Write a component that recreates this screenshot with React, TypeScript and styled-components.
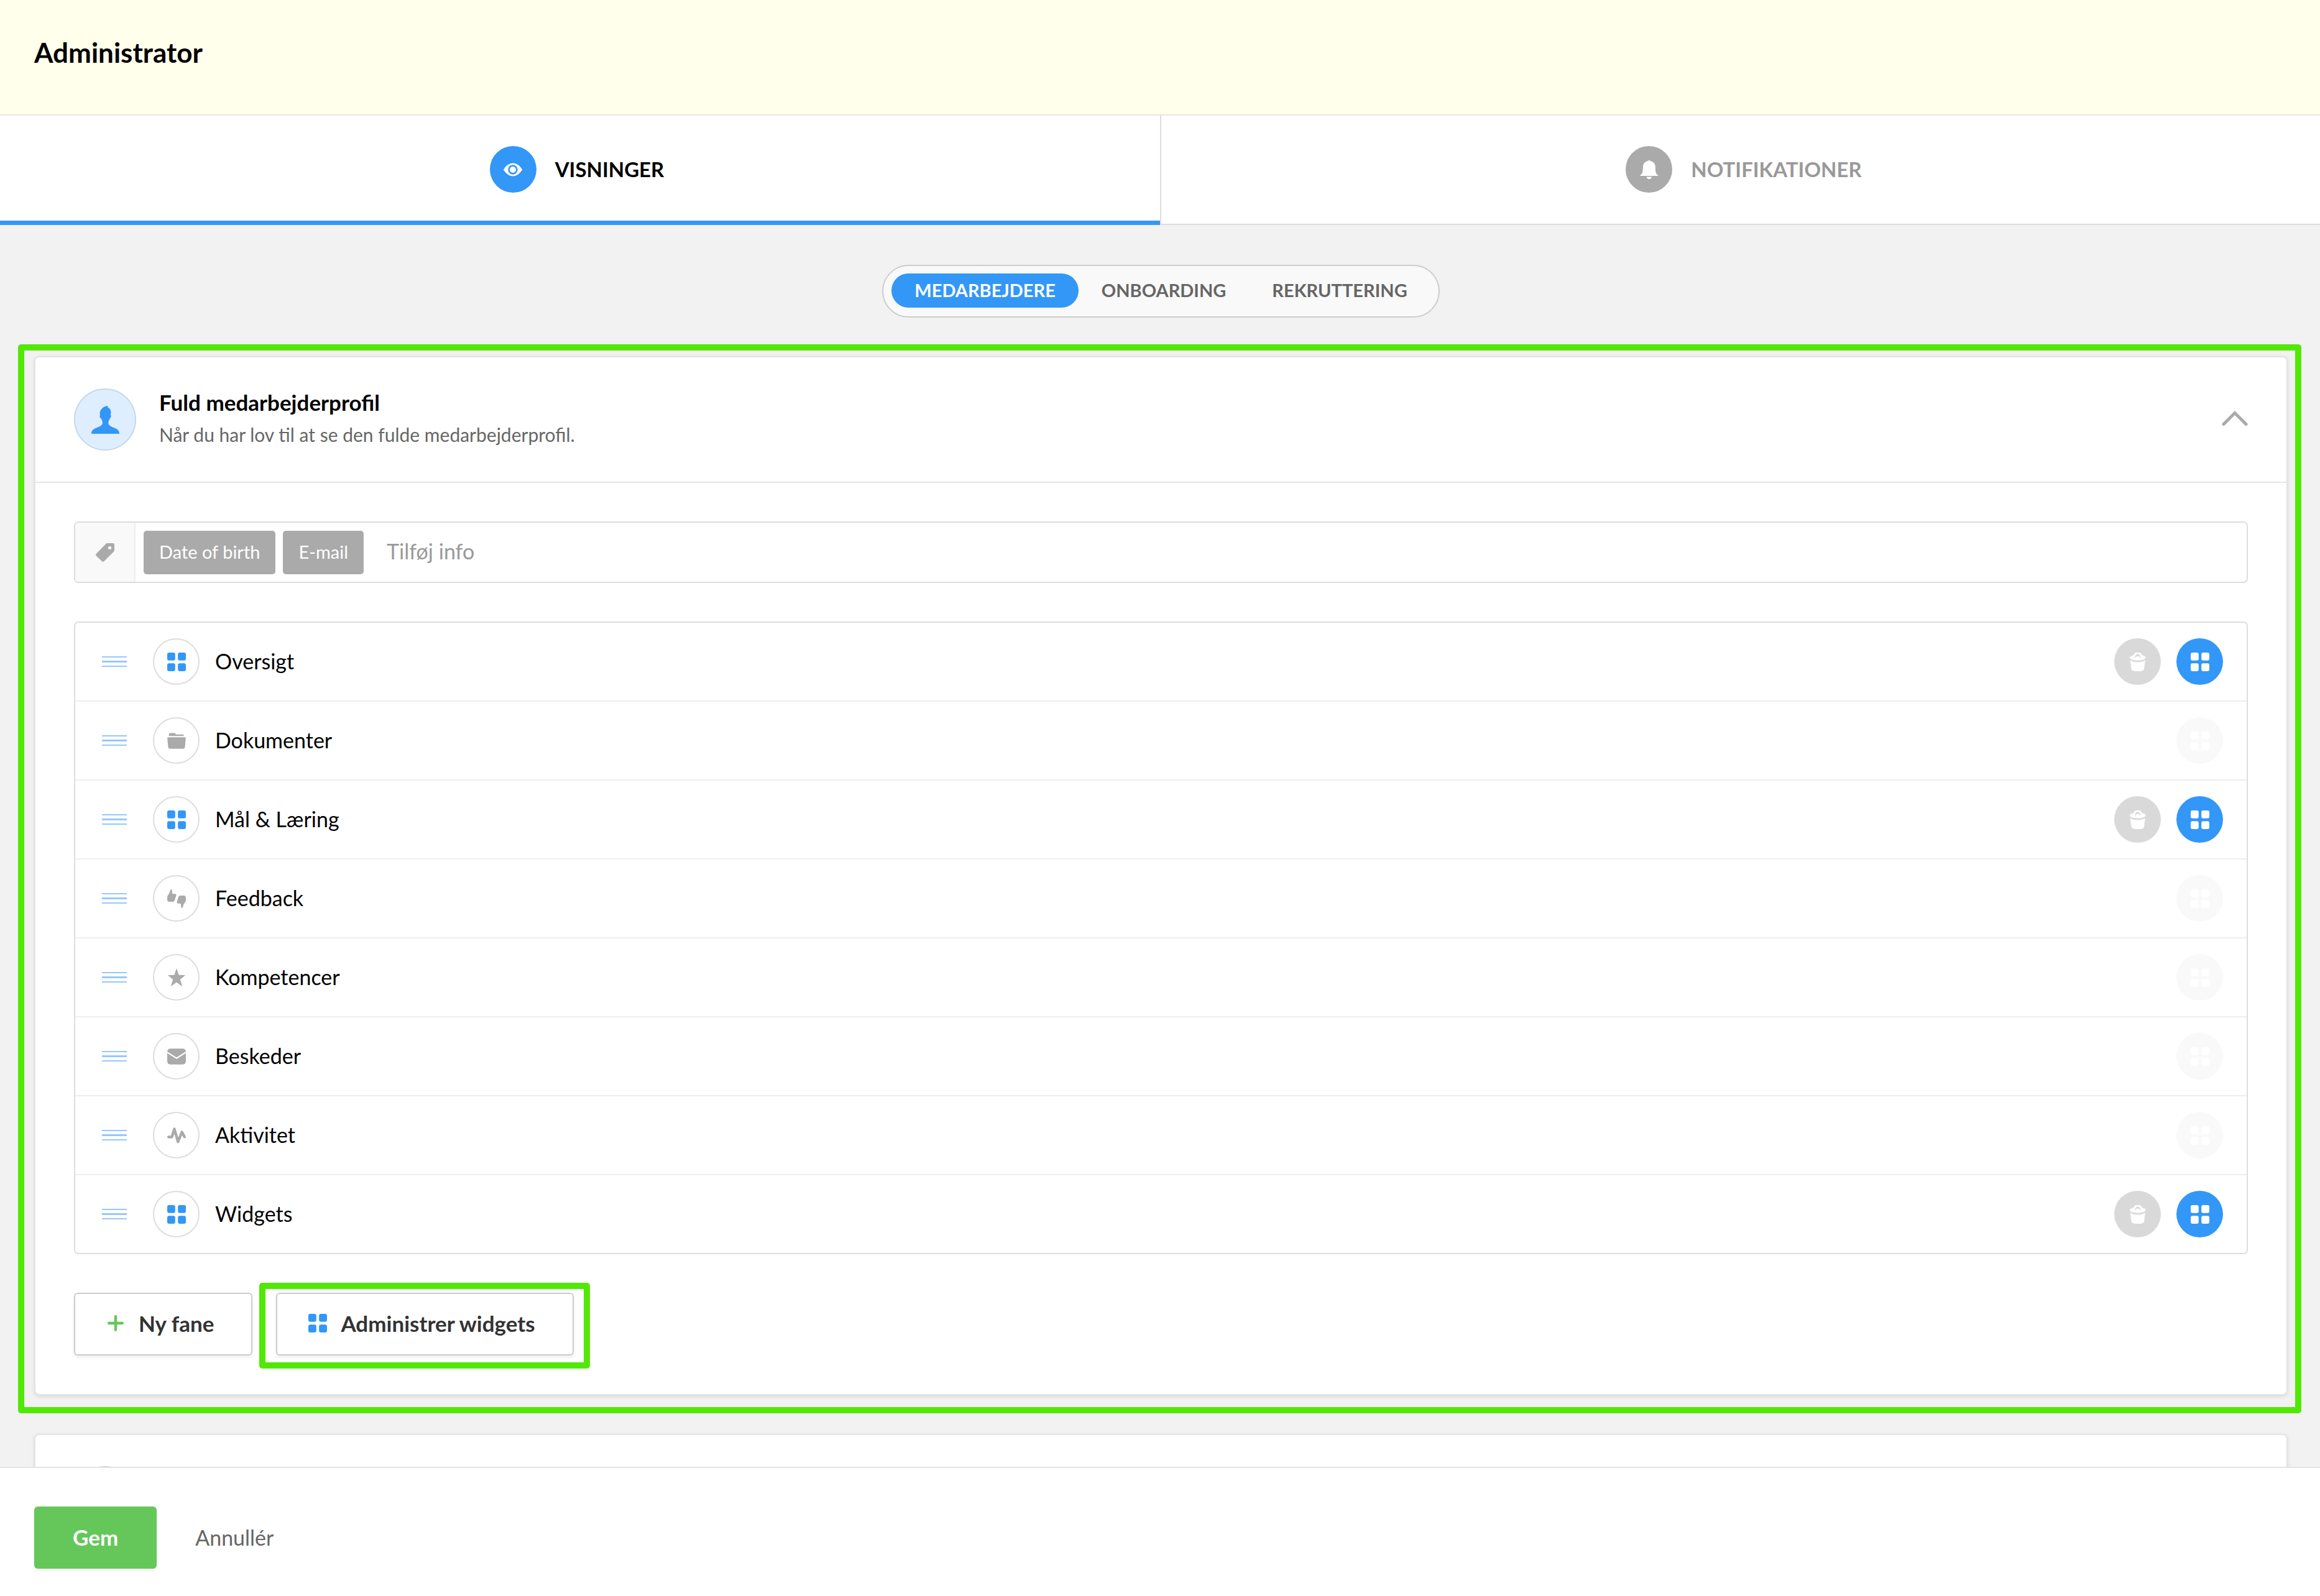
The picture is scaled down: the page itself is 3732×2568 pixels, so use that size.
import React, { useState } from "react";
import styled, { createGlobalStyle, css } from "styled-components";

const color = {
  blue: "#3397f7",
  green: "#65c759",
  highlight: "#52e805",
  grey: "#aaaaaa",
  border: "#dddddd",
  page: "#f2f2f2",
};

const GlobalStyle = createGlobalStyle`
  *, *::before, *::after { box-sizing: border-box; }
  body {
    margin: 0;
    background: ${color.page};
    color: #000;
    font-family: Lato, "Liberation Sans", sans-serif;
    font-size: 34px;
    line-height: 1.2;
  }
  button, input { font: inherit; color: inherit; }
  button { padding: 0; border: 0; background: none; cursor: pointer; }
`;

/* ---------- icons ---------- */

type IconName =
  | "eye" | "bell" | "grid" | "folder" | "thumbs" | "star"
  | "mail" | "activity" | "trash" | "tag" | "plus";

const THUMB =
  "M0 13C0 10.5 1.2 9.5 2.6 7.5C4.5 5 4.2 3 4.8 1.6C5.4 .2 7.6-.4 7.8 1.8C8 3.6 7.6 5.2 8 6.3C8.3 7.2 9 7.3 10 7.3H12.6C14.4 7.3 14.8 8.6 14.3 10.2L12 17.5C11.4 19.2 10.5 20 8.7 20H3.5C1.2 20 0 18.8 0 16.5Z";

const glyphs: Record<IconName, React.ReactNode> = {
  eye: (
    <>
      <path d="M.3 14.2C4.5 8 9.5 4.6 15 4.6S25.5 8 29.7 14.2C30.1 14.8 30.1 15.2 29.7 15.8C25.5 22 20.5 25.4 15 25.4S4.5 22 .3 15.8C-.1 15.2-.1 14.8 .3 14.2Z" />
      <circle cx="15" cy="15" r="6.4" fill="none" stroke={color.blue} strokeWidth="2.6" />
    </>
  ),
  bell: (
    <>
      <path d="M14.8 0C15.8 0 16.6 .4 17 1.2C21.7 1.8 24.6 5.5 24.8 10C25 15 25 19 26.4 21.5C27.3 23 29.4 23.8 29.4 25H.2C.2 23.8 2.3 23 3.2 21.5C4.8 18.8 4.8 15 5 10C5.2 5.5 8 1.8 12.6 1.2C13 .4 13.8 0 14.8 0Z" />
      <path d="M10.5 26.4H19.1C18.5 28.8 17 30 14.8 30S11.1 28.8 10.5 26.4Z" />
    </>
  ),
  grid: (
    <>
      <rect x="0" y="0" width="12.8" height="12.8" rx="3" />
      <rect x="17.2" y="0" width="12.8" height="12.8" rx="3" />
      <rect x="0" y="17.2" width="12.8" height="12.8" rx="3" />
      <rect x="17.2" y="17.2" width="12.8" height="12.8" rx="3" />
    </>
  ),
  folder: (
    <>
      <path d="M2.7 7.3V5C2.7 3.5 3.5 2.5 5 2.5H11.5C12.8 2.5 13 3 13.5 4C13.8 4.6 14 4.8 15 4.8H24.5C26 4.8 26.8 6 27 7.3Z" />
      <path d="M1.8 9.3H28.2C29.5 9.3 30 10 29.8 11.2L28.6 24.5C28.4 26.8 27.3 27.8 25 27.8H5C2.7 27.8 1.7 26.8 1.5 24.5L.2 11.2C0 10 .6 9.3 1.8 9.3Z" />
    </>
  ),
  thumbs: (
    <>
      <path d={THUMB} />
      <path d={THUMB} transform="rotate(180 15 15)" />
    </>
  ),
  star: (
    <path d="M15 0L18.6 10.8L29.3 11L20.8 18L24.2 29.3L15 22.5L5.8 29.3L9.2 18L.7 11L11.4 10.8Z" />
  ),
  mail: (
    <>
      <rect x="0" y="2.2" width="30" height="25.6" rx="5" />
      <path d="M-1 7.6L15 17.8L31 7.6" fill="none" stroke="#fff" strokeWidth="2.2" />
    </>
  ),
  activity: (
    <path
      d="M2.2 17.5L7.5 17.3L11.5 4.5L17.3 25.2L23.7 9.5L27.8 17.3"
      fill="none"
      stroke="currentColor"
      strokeWidth="4.4"
      strokeLinecap="round"
      strokeLinejoin="round"
    />
  ),
  trash: (
    <>
      <path
        fillRule="evenodd"
        d="M2 7.7C2 6 5 5 8.2 4.2C9 2.5 9.8 0 12 0H17.5C19.8 0 20.6 2.3 21.6 4C24.5 5 27.6 6 27.6 7.7C27.6 10.5 22 12.6 14.8 12.6S2 10.5 2 7.7ZM10 7.8H12C12.5 6.5 13 5.6 14.8 5.6S17 6.5 17.5 7.8H19.5L17.6 3.3C17.3 2.7 17 2.5 16.4 2.5H13.2C12.6 2.5 12.3 2.7 12 3.3Z"
      />
      <path d="M2.6 12.2C6 14.6 10 15.4 14.7 15.4S23.4 14.6 26.8 12.2L25 26.5C24.5 29.3 20 30.3 14.8 30.3S5.2 29.3 4.7 26.5Z" />
    </>
  ),
  tag: (
    <path
      fillRule="evenodd"
      d="M18.5 0H27.5A2.5 2.5 0 0 1 30 2.5V11.5C30 12.3 29.7 13 29.1 13.6L13.2 29.3C12.3 30.2 11 30.2 10.1 29.3L.7 20.2C-.2 19.3-.2 18 .7 17.1L16.4 .9C17 .3 17.7 0 18.5 0ZM22.6 4.8A2.6 2.6 0 1 0 22.6 10A2.6 2.6 0 1 0 22.6 4.8Z"
    />
  ),
  plus: (
    <path
      d="M15 4.2V25.8M4.2 15H25.8"
      fill="none"
      stroke="currentColor"
      strokeWidth="4.4"
      strokeLinecap="round"
    />
  ),
};

const IconSvg = styled.svg`
  display: block;
  flex: none;
  width: 30px;
  height: 30px;
  fill: currentColor;
`;

const Icon = ({ name }: { name: IconName }) => (
  <IconSvg viewBox="0 0 30 30" aria-hidden="true">
    {glyphs[name]}
  </IconSvg>
);

const PersonSvg = styled.svg`
  display: block;
  width: 45px;
  height: 45px;
  fill: currentColor;
`;

const PersonIcon = () => (
  <PersonSvg viewBox="0 0 45 45" aria-hidden="true">
    <path d="M0 45C0 39.5 3 37.5 8 35.5C13 33.5 18 31.5 18 27C18 25 16.5 22.5 15.8 20.5C14.3 20 12.8 17 13.6 15.2L14 14.8C13 12 13.6 8.5 15.5 6C17.5 3 21 1 24.5 .2L26.8 0L25.6 1L27 1.2L26 2.4C29.5 3.3 31.4 6.5 31.4 10C31.4 12 31 13.5 31 15C32.4 15.5 31.5 19 29.8 20.3C29.3 22.5 27.2 25 27.2 27C27.2 31.5 32 33.5 37 35.5C42 37.5 45 39.5 45 45Z" />
  </PersonSvg>
);

const ChevronSvg = styled.svg`
  display: block;
  width: 42px;
  height: 28px;
  fill: none;
  stroke: ${color.grey};
  stroke-width: 5;
  stroke-linecap: round;
  stroke-linejoin: miter;
`;

/* ---------- page frame ---------- */

const Page = styled.div`
  display: flex;
  flex-direction: column;
  height: 100vh;
`;

const TopBar = styled.header`
  flex: none;
  padding: 58px 55px 73px;
  background: #ffffeb;
  border-bottom: 2px solid #e6e6e0;
`;

const PageTitle = styled.h1`
  margin: 0;
  font-size: 44px;
  line-height: 53px;
  font-weight: 700;
`;

const TabBar = styled.nav`
  display: grid;
  grid-template-columns: 1fr 1fr;
  flex: none;
`;

const TabButton = styled.button<{ $active: boolean }>`
  display: flex;
  align-items: center;
  justify-content: center;
  gap: 30px;
  padding: 49px 0 52px;
  background: #fff;
  color: ${(p) => (p.$active ? "#000" : "#999")};
  font-size: 33px;
  font-weight: 700;
  box-shadow: ${(p) =>
    p.$active ? `inset 0 -7px 0 ${color.blue}` : `inset 0 -2px 0 ${color.border}`};

  &:first-child {
    padding-right: 10px;
  }
  &:last-child {
    padding-left: 10px;
    border-left: 2px solid ${color.border};
  }
`;

const round = css`
  display: flex;
  align-items: center;
  justify-content: center;
  flex: none;
  width: 75px;
  height: 75px;
  border-radius: 50%;
`;

const TabBadge = styled.span<{ $active: boolean }>`
  ${round}
  background: ${(p) => (p.$active ? color.blue : color.grey)};
  color: #fff;
`;

const Main = styled.main`
  display: flex;
  flex-direction: column;
  flex: 1 1 0;
  gap: 62px;
  min-height: 0;
  overflow: hidden;
  padding: 64px 52px 0 55px;
`;

const Footer = styled.footer`
  display: flex;
  align-items: center;
  flex: none;
  gap: 62px;
  padding: 62px 55px 44px;
  background: #fff;
  border-top: 2px solid #e3e3e3;
`;

/* ---------- segmented control ---------- */

const Segments = styled.div`
  display: flex;
  flex: none;
  align-self: center;
  padding: 12px 13px 14px;
  border: 2px solid #ccc;
  border-radius: 43px;
  background: #f9f9f9;
`;

const Segment = styled.button<{ $active: boolean }>`
  height: 55px;
  padding: 0 37px;
  border-radius: 28px;
  background: ${(p) => (p.$active ? color.blue : "transparent")};
  color: ${(p) => (p.$active ? "#fff" : "#666")};
  font-size: 29px;
  font-weight: 700;
`;

/* ---------- cards ---------- */

const Card = styled.section`
  position: relative;
  flex: none;
  border: 2px solid #e4e4e4;
  border-radius: 8px;
  background: #fff;
  box-shadow: 0 2px 6px rgba(0, 0, 0, 0.1);
`;

const Highlight = styled.div<{ $inset: string }>`
  position: absolute;
  inset: ${(p) => p.$inset};
  border: 10px solid ${color.highlight};
  border-radius: 5px;
  pointer-events: none;
`;

const CardHeader = styled.header`
  display: flex;
  align-items: center;
  gap: 37px;
  padding: 50px 62px;
`;

const Avatar = styled.span<{ $tone: "blue" | "sand" }>`
  display: flex;
  align-items: center;
  justify-content: center;
  width: 100px;
  height: 100px;
  border: 2px solid ${(p) => (p.$tone === "blue" ? "#c5d7e8" : "#cfcfb4")};
  border-radius: 50%;
  background: ${(p) => (p.$tone === "blue" ? "#deeeff" : "#f8f8e0")};
  color: ${color.blue};
`;

const CardHeading = styled.div`
  display: flex;
  flex: 1;
  flex-direction: column;
  gap: 13px;
  padding-bottom: 7px;
`;

const CardTitle = styled.h2`
  margin: 0;
  font-size: 35px;
  line-height: 42px;
  font-weight: 700;
`;

const CardText = styled.p`
  margin: 0;
  color: #666;
  font-size: 30px;
  line-height: 36px;
`;

const CardBody = styled.div`
  display: flex;
  flex-direction: column;
  gap: 62px;
  padding: 62px;
  border-top: 2px solid #e4e4e4;
`;

/* ---------- tag field ---------- */

const TagField = styled.div`
  display: flex;
  height: 99px;
  border: 2px solid ${color.border};
  border-radius: 7px;
  overflow: hidden;
`;

const TagLabel = styled.label`
  display: flex;
  align-items: center;
  justify-content: center;
  width: 97px;
  border-right: 2px solid #eee;
  background: #f9f9f9;
  color: ${color.grey};
`;

const TagList = styled.div`
  display: flex;
  align-items: center;
  gap: 12px;
  padding-left: 13px;
`;

const Chip = styled.span`
  padding: 0 25px 2px;
  border-radius: 5px;
  background: ${color.grey};
  color: #fff;
  font-size: 29px;
  line-height: 68px;
`;

const TagInput = styled.input`
  flex: 1;
  min-width: 0;
  padding: 0 37px 2px;
  border: 0;
  outline: 0;
  background: none;
  &::placeholder { color: #999; opacity: 1; }
`;

/* ---------- sortable rows ---------- */

const RowList = styled.ul`
  margin: 0;
  padding: 0;
  list-style: none;
  border: 2px solid ${color.border};
  border-radius: 7px;
`;

const Row = styled.li`
  display: flex;
  align-items: center;
  height: 127px;
  padding: 0 38px 0 43px;
  border-bottom: 2px solid #eee;
  &:last-child {
    height: 125px;
    border-bottom: 0;
  }
`;

const DragHandle = styled.button`
  display: flex;
  flex-direction: column;
  gap: 5px;
  width: 40px;
  margin-right: 42px;
  cursor: grab;
`;

const DragLine = styled.span`
  height: 2px;
  background: #96c8fa;
  &:nth-child(2) { height: 3px; }
`;

const RowIcon = styled.span<{ $accent: boolean }>`
  ${round}
  margin-right: 25px;
  border: 2px solid ${color.border};
  color: ${(p) => (p.$accent ? color.blue : color.grey)};
`;

const RowName = styled.span`
  flex: 1;
`;

const RowActions = styled.div`
  display: flex;
  gap: 25px;
`;

const ActionButton = styled.button<{ $kind: "delete" | "widgets" }>`
  ${round}
  background: ${(p) => (p.$kind === "delete" ? "#d9d9d9" : color.blue)};
  color: #fff;
  &:disabled {
    background: #f9f9f9;
    cursor: default;
  }
`;

/* ---------- buttons ---------- */

const ButtonBar = styled.div`
  display: flex;
  gap: 38px;
`;

const ButtonSlot = styled.div`
  position: relative;
`;

const OutlineButton = styled.button<{ $tone: "green" | "blue" }>`
  display: flex;
  align-items: center;
  gap: 22px;
  height: 101px;
  padding: 0 60px 3px 50px;
  border: 2px solid #ccc;
  border-radius: 6px;
  background: #fff;
  color: #333;
  font-size: 35px;
  font-weight: 700;
  box-shadow: 0 3px 5px rgba(0, 0, 0, 0.08);

  ${IconSvg} {
    color: ${(p) => (p.$tone === "green" ? color.green : color.blue)};
  }
`;

const SaveButton = styled.button`
  height: 100px;
  padding: 0 62px 2px;
  border-radius: 6px;
  background: ${color.green};
  color: #fff;
  font-size: 35px;
  font-weight: 700;
  box-shadow: 0 3px 5px rgba(0, 0, 0, 0.08);
`;

const CancelButton = styled.button`
  color: #666;
`;

/* ---------- data ---------- */

const tabs: { label: string; icon: IconName }[] = [
  { label: "VISNINGER", icon: "eye" },
  { label: "NOTIFIKATIONER", icon: "bell" },
];

const segments = ["MEDARBEJDERE", "ONBOARDING", "REKRUTTERING"];

const chips = ["Date of birth", "E-mail"];

const rows: { name: string; icon: IconName }[] = [
  { name: "Oversigt", icon: "grid" },
  { name: "Dokumenter", icon: "folder" },
  { name: "Mål & Læring", icon: "grid" },
  { name: "Feedback", icon: "thumbs" },
  { name: "Kompetencer", icon: "star" },
  { name: "Beskeder", icon: "mail" },
  { name: "Aktivitet", icon: "activity" },
  { name: "Widgets", icon: "grid" },
];

export default function App() {
  const [tab, setTab] = useState(0);
  const [segment, setSegment] = useState(0);

  return (
    <Page>
      <GlobalStyle />
      <TopBar>
        <PageTitle>Administrator</PageTitle>
      </TopBar>
      <TabBar>
        {tabs.map((t, i) => (
          <TabButton key={t.label} $active={i === tab} onClick={() => setTab(i)}>
            <TabBadge $active={i === tab}>
              <Icon name={t.icon} />
            </TabBadge>
            {t.label}
          </TabButton>
        ))}
      </TabBar>

      <Main>
        <Segments>
          {segments.map((label, i) => (
            <Segment key={label} $active={i === segment} onClick={() => setSegment(i)}>
              {label}
            </Segment>
          ))}
        </Segments>

        <Card>
          <CardHeader>
            <Avatar $tone="blue">
              <PersonIcon />
            </Avatar>
            <CardHeading>
              <CardTitle>Fuld medarbejderprofil</CardTitle>
              <CardText>Når du har lov til at se den fulde medarbejderprofil.</CardText>
            </CardHeading>
            <button aria-expanded="true">
              <ChevronSvg viewBox="0 0 42 28" aria-hidden="true">
                <path d="M3 21.5L21 3.5L39 21.5" />
              </ChevronSvg>
            </button>
          </CardHeader>

          <CardBody>
            <TagField>
              <TagLabel htmlFor="add-info">
                <Icon name="tag" />
              </TagLabel>
              <TagList>
                {chips.map((chip) => (
                  <Chip key={chip}>{chip}</Chip>
                ))}
              </TagList>
              <TagInput id="add-info" placeholder="Tilføj info" />
            </TagField>

            <RowList>
              {rows.map((row) => {
                const editable = row.icon === "grid";
                return (
                  <Row key={row.name}>
                    <DragHandle>
                      <DragLine />
                      <DragLine />
                      <DragLine />
                    </DragHandle>
                    <RowIcon $accent={editable}>
                      <Icon name={row.icon} />
                    </RowIcon>
                    <RowName>{row.name}</RowName>
                    <RowActions>
                      {editable && (
                        <ActionButton $kind="delete">
                          <Icon name="trash" />
                        </ActionButton>
                      )}
                      <ActionButton $kind="widgets" disabled={!editable}>
                        <Icon name="grid" />
                      </ActionButton>
                    </RowActions>
                  </Row>
                );
              })}
            </RowList>

            <ButtonBar>
              <OutlineButton $tone="green">
                <Icon name="plus" />
                Ny fane
              </OutlineButton>
              <ButtonSlot>
                <OutlineButton $tone="blue">
                  <Icon name="grid" />
                  Administrer widgets
                </OutlineButton>
                <Highlight $inset="-16px -26px -21px -27px" />
              </ButtonSlot>
            </ButtonBar>
          </CardBody>
          <Highlight $inset="-21px -24px -31px -28px" />
        </Card>

        <Card>
          <CardHeader>
            <Avatar $tone="sand" />
          </CardHeader>
        </Card>
      </Main>

      <Footer>
        <SaveButton>Gem</SaveButton>
        <CancelButton>Annullér</CancelButton>
      </Footer>
    </Page>
  );
}
